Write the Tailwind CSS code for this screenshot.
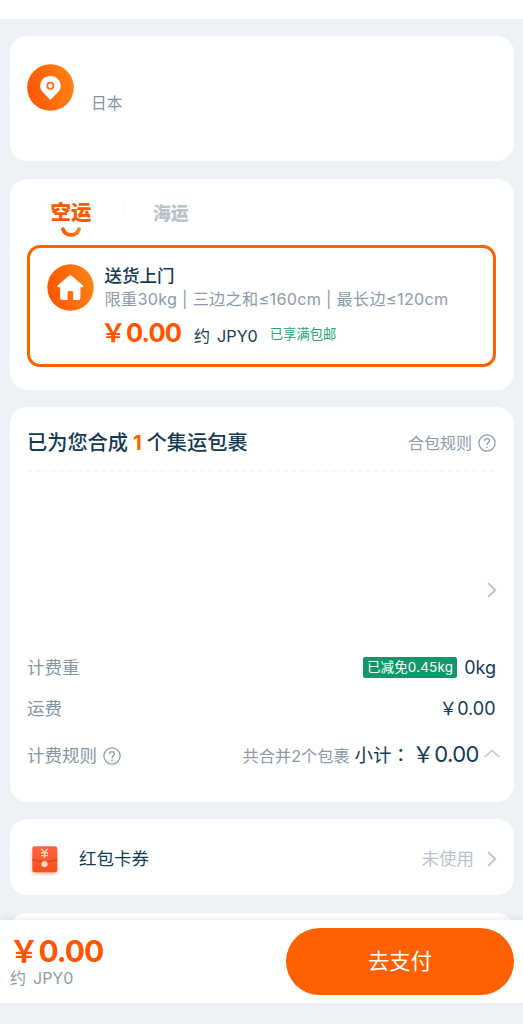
<!DOCTYPE html>
<html lang="zh-CN">
<head>
<meta charset="utf-8">
<meta name="viewport" content="width=device-width, initial-scale=1">
<title>集运订单</title>
<script src="https://cdn.jsdelivr.net/npm/@tailwindcss/browser@4"></script>
</head>
<body class="h-[1024px] overflow-hidden bg-[#eef2f6] font-['Inter','Noto_Sans_CJK_SC',sans-serif] text-[#143a56]">
<svg class="absolute size-0"><defs><linearGradient id="org" x1="0" y1="0.6" x2="1" y2="0.4"><stop offset="0" stop-color="#ff5500"/><stop offset="1" stop-color="#ff8316"/></linearGradient></defs></svg>
<div class="flex h-[1024px] flex-col">
  <div class="h-[19px] shrink-0 bg-white"></div>
  <main class="flex h-[901px] shrink-0 flex-col gap-[17.5px] overflow-hidden px-[10px] pt-[17px]">

    <section class="flex h-[125px] w-[504px] shrink-0 gap-[17px] rounded-[17px] bg-white pt-[28px] pl-[17px]">
      <svg class="size-[47px]" viewBox="0 0 47 47"><circle cx="23.5" cy="23.5" r="23.3" fill="url(#org)"/><path d="M23.4 36 L16.2 28.6 C14.2 26.5 13.2 24.5 13.2 22.2 C13.2 16 17.8 12 23.4 12 C29 12 33.7 16 33.7 22.2 C33.7 24.5 32.7 26.5 30.6 28.6 Z" fill="#fff"/><circle cx="23.4" cy="21.7" r="3.1" fill="none" stroke="#ff6f0d" stroke-width="1.8"/></svg>
      <div class="pt-[29px] text-[15.7px] leading-[22px] text-[#8494a5]">日本</div>
    </section>

    <section class="flex h-[211px] w-[504px] shrink-0 flex-col rounded-[17px] bg-white px-[17px]">
      <div class="flex h-[66px] shrink-0 pl-[23.5px]">
        <div class="flex w-[41px] flex-col items-center pt-[21px]">
          <div class="text-[20.5px] leading-[26px] font-black text-[#ff5a00]">空运</div>
          <svg class="mt-[1.5px] -ml-[1px] h-[11px] w-[22px]" viewBox="0 0 22 11"><path d="M3 2.2 C6 9.8 16 9.8 19 2.2" fill="none" stroke="url(#org)" stroke-width="3.8" stroke-linecap="round"/></svg>
        </div>
        <div class="mt-[23px] ml-[32px] h-[14px] w-px bg-[#f3f5f7]"></div>
        <div class="ml-[28.5px] pt-[22px] text-[17.8px] leading-[26px] font-black text-[#b8c2cc]">海运</div>
      </div>
      <div class="flex h-[122px] w-[469px] shrink-0 gap-[10.5px] rounded-[13px] border-3 border-[#ff6000] pt-[16px] pl-[17px]">
        <svg class="size-[47px] shrink-0" viewBox="0 0 47 47"><circle cx="23.5" cy="23.5" r="23.2" fill="url(#org)"/><path d="M22 11.8 Q23.3 10.8 24.6 11.8 L36 21.6 Q37 23 35.5 23.2 L33.4 23.2 L33.4 33.8 Q33.4 36 31.2 36 L26.2 36 L26.2 28.6 Q26.2 27 24.8 27 L22.2 27 Q20.7 27 20.7 28.6 L20.7 36 L15.4 36 Q13.1 36 13.1 33.8 L13.1 23.2 L11.2 23.2 Q9.6 23 10.6 21.6 Z" fill="#fff"/></svg>
        <div class="flex flex-col whitespace-nowrap">
          <div class="text-[17.5px] leading-[24px] font-medium">送货上门</div>
          <div class="text-[16.2px] leading-[23px] tracking-[0.29px] text-[#8c9aaa]">限重30kg | 三边之和≤160cm | 最长边≤120cm</div>
          <div class="mt-[4px] flex items-baseline leading-[36px]">
            <span class="-ml-[4px] text-[25.5px] font-bold text-[#ff5500]">￥</span><span class="text-[25.5px] font-bold tracking-[-0.9px] text-[#ff5500]">0.00</span>
            <span class="ml-[13px] text-[16px]">约</span><span class="ml-[7px] text-[16.2px]">JPY0</span>
            <span class="ml-[12px] -translate-y-[3px] text-[13.3px] text-[#25a475]">已享满包邮</span>
          </div>
        </div>
      </div>
    </section>

    <section class="flex h-[394.5px] w-[504px] shrink-0 flex-col rounded-[17px] bg-white px-[17px]">
      <div class="flex h-[63px] shrink-0 items-center justify-between pt-[8px]">
        <h2 class="text-[20.2px] leading-[28px] font-medium">已为您合成<span class="mx-[5px] font-bold text-[#ff6000]">1</span>个集运包裹</h2>
        <div class="flex items-center gap-[6px] pr-px text-[16px] text-[#8c9aaa]">合包规则
          <svg class="size-[18px]" viewBox="0 0 18 18" fill="none" stroke="#8c9aaa" stroke-width="1.2"><circle cx="9" cy="9" r="8.1"/><path d="M6.6 7 C6.6 3.8 11.4 3.9 11.4 6.9 C11.4 8.8 9 8.8 9 11" stroke-width="1.3"/><circle cx="9" cy="13.2" r=".5" fill="#8c9aaa" stroke-width=".6"/></svg>
        </div>
      </div>
      <div class="h-[2px] w-[469px] shrink-0 bg-[repeating-linear-gradient(90deg,#f5f6f6_0_5.3px,transparent_5.3px_8.25px)]"></div>
      <div class="flex h-[175px] shrink-0 items-end justify-end pb-[48.5px]">
        <svg class="h-[18px] w-[11px]" viewBox="0 0 11 18"><path d="M2 2 L9.2 9 L2 16" fill="none" stroke="#bfc9d1" stroke-width="2"/></svg>
      </div>
      <div class="flex h-[41px] shrink-0 items-center justify-between pr-px text-[17.5px]">
        <span class="pt-px text-[#8494a5]">计费重</span>
        <span class="flex items-center gap-[7px] text-[18px]"><span class="flex h-[21px] items-center rounded-[2px] bg-[#11986a] px-[4px] text-[13.5px] tracking-[0.15px] text-white">已减免0.45kg</span>0kg</span>
      </div>
      <div class="flex h-[41px] shrink-0 items-center justify-between pr-[1.5px] text-[17.5px]">
        <span class="pt-px text-[#8494a5]">运费</span>
        <span class="text-[18px]">￥0.00</span>
      </div>
      <div class="flex h-[54px] shrink-0 items-center justify-between text-[17.5px]">
        <span class="flex items-center gap-[6px] text-[#8494a5]">计费规则
          <svg class="size-[18px]" viewBox="0 0 18 18" fill="none" stroke="#8c9aaa" stroke-width="1.2"><circle cx="9" cy="9" r="8.1"/><path d="M6.6 7 C6.6 3.8 11.4 3.9 11.4 6.9 C11.4 8.8 9 8.8 9 11" stroke-width="1.3"/><circle cx="9" cy="13.2" r=".5" fill="#8c9aaa" stroke-width=".6"/></svg>
        </span>
        <span class="-mt-[4px] -mr-[4px] flex items-baseline whitespace-nowrap">
          <span class="text-[16.2px] text-[#8c9aaa]">共合并2个包裹</span>
          <span class="ml-[5px] text-[18.5px]">小计<span lang="zh-TW" class="font-['Noto_Sans_CJK_TC']">：</span></span>
          <span class="ml-[2px] text-[22px]">￥</span><span class="text-[22px] tracking-[-0.5px]">0.00</span>
          <svg class="ml-[4px] h-[9px] w-[18px] -translate-y-[4px]" viewBox="0 0 18 9"><path d="M1.5 8 L9 1.6 L16.5 8" fill="none" stroke="#cbd3d9" stroke-width="2"/></svg>
        </span>
      </div>
    </section>

    <section class="flex h-[76px] w-[504px] shrink-0 items-center rounded-[17px] bg-white pt-[5px] pr-[17px] pl-[20px]">
      <svg class="mt-[2px] h-[32px] w-[30px]" viewBox="0 0 30 32"><defs><linearGradient id="env" x1="0" y1="0" x2="0" y2="1"><stop offset="0" stop-color="#ff6440"/><stop offset="1" stop-color="#f6501c"/></linearGradient></defs><rect x="2" y="4" width="25" height="25" rx="3" fill="#ffb79f" class="blur-[1.5px]"/><rect x="2.3" y="1.2" width="25" height="26" rx="2.5" fill="url(#env)"/><path d="M2.3 14.5 Q14.5 19 27.3 14.5" fill="none" stroke="#c94420" stroke-width="1"/><circle cx="14.5" cy="19" r="3.1" fill="#ffd8c8"/><path d="M11.3 3.8 L14.5 7.6 L17.7 3.8 M14.5 7.6 V13.2 M11 8 H18 M11 10.6 H18" fill="none" stroke="#ffd2b4" stroke-width="1.4"/></svg>
      <span class="ml-[19px] text-[17.5px]">红包卡券</span>
      <span class="ml-auto text-[17.5px] text-[#b9c3cc]">未使用</span>
      <svg class="-mt-[2px] ml-[12px] h-[18px] w-[11px]" viewBox="0 0 11 18"><path d="M2 2 L9.2 9 L2 16" fill="none" stroke="#bfc9d1" stroke-width="2"/></svg>
    </section>

    <section class="h-[76px] w-[504px] shrink-0 rounded-[17px] bg-white"></section>
  </main>

  <footer class="z-10 flex h-[83px] shrink-0 justify-between bg-white pr-[9px] pl-[10px] shadow-[0_-2px_6px_rgba(0,0,0,0.07)]">
    <div class="flex flex-col pt-[13px]">
      <div class="-ml-[1px] text-[30px] leading-[37px] font-bold text-[#ff5500]">￥<span class="-ml-[0.5px] tracking-[-1.1px]">0.00</span></div>
      <div class="-mt-px text-[16px] leading-[18px] text-[#8c9aaa]">约<span class="ml-[7px]">JPY0</span></div>
    </div>
    <button class="mt-[8px] h-[67px] w-[228px] rounded-full bg-[#ff6000] text-[21.3px] text-white">去支付</button>
  </footer>
</div>
</body>
</html>
